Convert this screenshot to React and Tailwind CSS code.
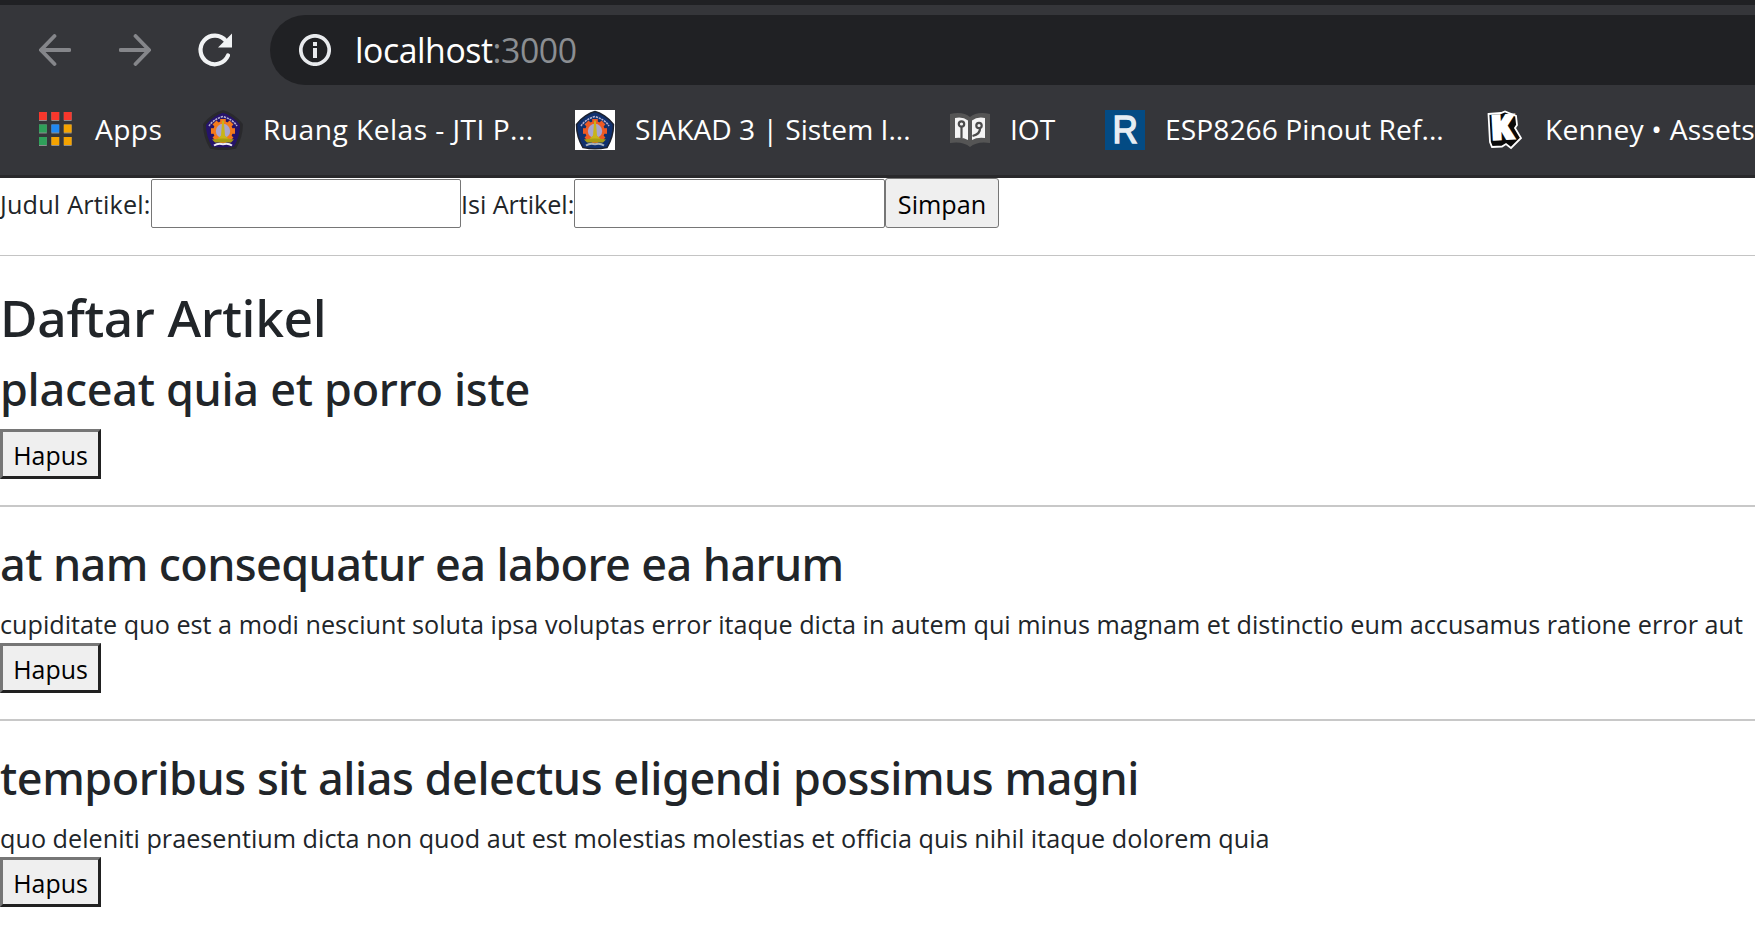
import React from "react";

function BackArrow({ flip }) {
  return (
    <svg viewBox="0 0 32 32" className={flip ? "h-8 w-8 -scale-x-100" : "h-8 w-8"} fill="none" stroke="#85868a" strokeWidth="3.8" strokeLinecap="round">
      <path d="M30.400 16H2.400M15.500 2L2 16l13.500 14" />
    </svg>
  );
}

function Reload() {
  return (
    <svg viewBox="0 0 36 36" className="h-9 w-9">
      <path d="M31 23.500A14.300 14.300 0 1 1 29 9" fill="none" stroke="#f1f3f4" strokeWidth="4.2" strokeLinecap="round" />
      <path d="M35 1.500v14H21z" fill="#f1f3f4" />
    </svg>
  );
}

function Info() {
  return (
    <svg viewBox="0 0 32 32" className="h-8 w-8">
      <circle cx="16" cy="16" r="14.200" fill="none" stroke="#e8eaed" strokeWidth="3.700" />
      <rect x="14" y="8" width="4" height="4" fill="#e8eaed" />
      <rect x="14" y="14" width="4" height="10" fill="#e8eaed" />
    </svg>
  );
}

const APP_DOTS = [
  ["#f8372c", "#f8372c", "#f8372c"],
  ["#2fa05a", "#2189f3", "#f5a300"],
  ["#2fa05a", "#f5a300", "#f5a300"],
];

function AppsIcon() {
  return (
    <svg viewBox="0 0 33 34" className="mb-0.5 h-[34px] w-[33px] shrink-0">
      {APP_DOTS.map((row, y) =>
        row.map((c, x) => (
          <g key={`${x}-${y}`}>
            <rect x={x * 12.400} y={y * 12.500} width="7.800" height="9" fill="#8d8e90" />
            <rect x={x * 12.400} y={y * 12.500} width="7.800" height="8" fill={c} />
          </g>
        ))
      )}
    </svg>
  );
}

const TEETH = [0, 45, 90, 135, 180, 225, 270, 315];

function Emblem({ boxed }) {
  const shield = "M20 1.500C25 2.500 34 8 38.500 14.500C38.500 23 36 31 32 37.500Q20 40 8 37.500C4 31 1.500 23 1.500 14.500C6 8 15 2.500 20 1.500Z";
  return (
    <svg viewBox="0 0 40 40" className="h-10 w-10 shrink-0">
      {boxed && <rect width="40" height="40" fill="#ffffff" />}
      <path d={shield} fill={boxed ? "#10306e" : "#25136a"} stroke={boxed ? "#1c2230" : "#29292c"} strokeWidth={boxed ? "1.500" : "2.800"} strokeLinejoin="round" />
      <path d="M6 16Q10 9.500 20 6.500Q30 9.500 34 16" fill="none" stroke="#b5b1d0" strokeWidth="1.500" strokeDasharray="2.200 0.800" />
      <g fill={boxed ? "#ee5a24" : "#f47a1c"}>
        {TEETH.map((a) => (
          <rect key={a} x="17.200" y="9" width="5.600" height="5" transform={`rotate(${a} 20 21)`} />
        ))}
        <circle cx="20" cy="21" r="9.800" />
      </g>
      <circle cx="20" cy="21" r="7.200" fill="#a9a5cf" />
      <path d="M19.200 10.500h1.600l1.200 15 3.200 3v2H14.800v-2l3.200-3z" fill="#c8b41a" />
      <path d="M9 29.500Q20 27.500 31 29.500L28 32.500H12z" fill="#a89c13" />
      <path d="M11 35.500Q15 32.800 20 34.300Q25 32.800 29 35.500" fill="none" stroke={boxed ? "#aab2bb" : "#f0eef5"} strokeWidth="2" />
    </svg>
  );
}

function BookIcon() {
  return (
    <svg viewBox="0 0 40 36" className="mb-px h-9 w-10 shrink-0">
      <path d="M0 2Q13-1 20 5Q27-1 40 2V31Q27 29 20 35Q13 29 0 31Z" fill="#555555" />
      <path d="M5 6Q13 4.500 18 8.500V28Q13 25 5 26Z" fill="#f4f4f4" />
      <path d="M35 6Q27 4.500 22 8.500V28Q27 25 35 26Z" fill="#f4f4f4" />
      <g fill="none" stroke="#4c4c4c" strokeWidth="2.200">
        <circle cx="11.500" cy="12" r="2.700" />
        <path d="M11.500 15V26" />
        <circle cx="29" cy="13.500" r="2.700" />
        <path d="M30 16Q30.500 22 22.500 24" />
      </g>
    </svg>
  );
}

function RIcon() {
  return (
    <div className="flex h-10 w-10 shrink-0 items-center justify-center bg-[#034b84] pb-px font-['Liberation_Sans',sans-serif] text-[39px] leading-10 text-[#e6edf3]">
      <span className="scale-x-90 [-webkit-text-stroke:1.500px_#e6edf3]">R</span>
    </div>
  );
}

function KIcon() {
  return (
    <svg viewBox="0 0 36 40" className="h-10 w-9 shrink-0 overflow-visible" fontFamily="'Open Sans', sans-serif" fontWeight="800" fontSize="33">
      <path d="M1.500 4L14 3L18 1.500L29 6L30 15L28 18L34 28L24 38L19 34L15 36.500L5 37L3 32Z" fill="#0a0a0a" stroke="#ffffff" strokeWidth="1.800" />
      <text x="4" y="29" transform="rotate(-3 16 20)" fill="#ffffff" stroke="#ffffff" strokeWidth="2.500">K</text>
    </svg>
  );
}

const ARTICLES = [
  { title: "placeat quia et porro iste", spacing: "tracking-[-0.300px]", body: "" },
  {
    title: "at nam consequatur ea labore ea harum",
    spacing: "tracking-[-0.600px]",
    body: "cupiditate quo est a modi nesciunt soluta ipsa voluptas error itaque dicta in autem qui minus magnam et distinctio eum accusamus ratione error aut",
  },
  {
    title: "temporibus sit alias delectus eligendi possimus magni",
    spacing: "tracking-[-0.460px]",
    body: "quo deleniti praesentium dicta non quod aut est molestias molestias et officia quis nihil itaque dolorem quia",
  },
];

function Article({ title, spacing, body, first }) {
  return (
    <article>
      {!first && <hr className="mt-[26px] mb-7 h-0.5 border-0 bg-[#c8c8c8]" />}
      <h3 className={`font-['Noto_Sans',sans-serif] text-[45px] font-medium ${spacing} ${first ? "mt-3 h-[55px] leading-[55px]" : "h-14 leading-[58px]"}`}>{title}</h3>
      {body ? <p className="mt-[13px] h-[39px] leading-10 last-of-type:tracking-[0.010px]">{body}</p> : <div className="h-[13px]" />}
      <button className="block h-[50px] w-[101px] border-3 border-t-[#767676] border-r-[#212121] border-b-[#212121] border-l-[#767676] bg-[#efefef] text-[24.900px] leading-[46px] text-black">Hapus</button>
    </article>
  );
}

export default function App() {
  return (
    <div className="h-[933px] w-[1755px] overflow-hidden bg-white font-['Open_Sans',sans-serif] whitespace-nowrap">
      <header className="h-[178px] border-t-5 border-b-3 border-t-[#202124] border-b-[#29292b] bg-[#35363a] text-white">
        <div className="flex h-20 items-center pt-2.5 pl-[39px]">
          <BackArrow />
          <div className="ml-12"><BackArrow flip /></div>
          <div className="ml-[46px]"><Reload /></div>
          <div className="ml-[37px] flex h-[70px] flex-1 items-center rounded-l-full bg-[#202124] pl-[29px] text-[33.800px]">
            <Info />
            <span className="ml-6 tracking-[-0.450px]">localhost</span>
            <span className="tracking-[-0.400px] text-[#8b8e92]">:3000</span>
          </div>
        </div>
        <nav className="flex h-[90px] items-center overflow-hidden pl-[39px] text-[28.200px] leading-[38px]">
          <AppsIcon />
          <span className="ml-[23px] w-[108px] shrink-0 pb-0.5 tracking-[0.400px]">Apps</span>
          <Emblem />
          <span className="ml-5 w-[312px] shrink-0 pb-0.5 tracking-[0.450px]">Ruang Kelas - JTI P...</span>
          <Emblem boxed />
          <span className="ml-5 w-[315px] shrink-0 pb-0.5">SIAKAD 3 | Sistem I...</span>
          <BookIcon />
          <span className="ml-5 w-[95px] shrink-0 pb-0.5">IOT</span>
          <RIcon />
          <span className="ml-5 w-[322px] shrink-0 pb-0.5 tracking-[0.050px]">ESP8266 Pinout Ref...</span>
          <KIcon />
          <span className="ml-[22px] shrink-0 pb-0.5 tracking-[0.200px]">Kenney • Assets,</span>
        </nav>
      </header>
      <main className="text-[25.200px] text-[#212529]">
        <form className="flex h-[50px] items-start leading-[50px]">
          <label className="h-[50px] w-[151px] pt-px tracking-[0.200px]">Judul Artikel:</label>
          <input className="mt-px h-[49px] w-[310px] rounded-xs border border-[#767676] bg-white" />
          <label className="h-[50px] w-[113px] pt-px tracking-[-0.050px]">Isi Artikel:</label>
          <input className="mt-px h-[49px] w-[311px] rounded-xs border border-[#767676] bg-white" />
          <button type="button" className="h-[50px] w-[114px] rounded-[3px] border border-[#767676] bg-[#efefef] pt-px leading-[48px] text-black">Simpan</button>
        </form>
        <hr className="mt-[27px] h-px border-0 bg-[#c4c4c4]" />
        <h2 className="mt-[30px] h-[63px] font-['Noto_Sans',sans-serif] text-[51.500px] leading-[62px] font-medium tracking-[-0.350px]">Daftar Artikel</h2>
        {ARTICLES.map((a, i) => (
          <Article key={a.title} {...a} first={i === 0} />
        ))}
      </main>
    </div>
  );
}
